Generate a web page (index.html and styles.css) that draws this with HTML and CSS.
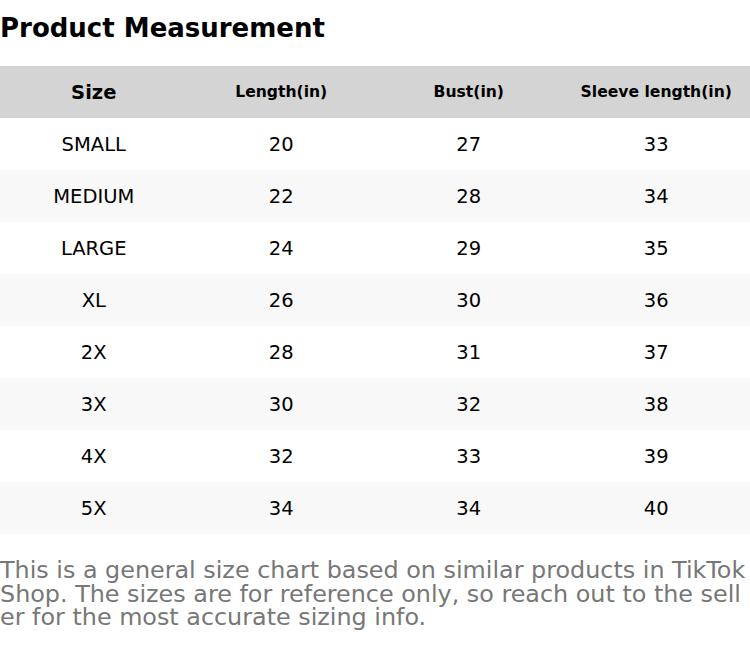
FILE: index.html
```html
<!DOCTYPE html>
<html>
<head>
<meta charset="utf-8">
<link rel="stylesheet" href="styles.css">
</head>
<body>
<h1 class="title">Product Measurement</h1>
<table class="chart">
  <thead>
    <tr><th class="size-head">Size</th><th>Length(in)</th><th>Bust(in)</th><th>Sleeve length(in)</th></tr>
  </thead>
  <tbody>
    <tr><td>SMALL</td><td>20</td><td>27</td><td>33</td></tr>
    <tr><td>MEDIUM</td><td>22</td><td>28</td><td>34</td></tr>
    <tr><td>LARGE</td><td>24</td><td>29</td><td>35</td></tr>
    <tr><td>XL</td><td>26</td><td>30</td><td>36</td></tr>
    <tr><td>2X</td><td>28</td><td>31</td><td>37</td></tr>
    <tr><td>3X</td><td>30</td><td>32</td><td>38</td></tr>
    <tr><td>4X</td><td>32</td><td>33</td><td>39</td></tr>
    <tr><td>5X</td><td>34</td><td>34</td><td>40</td></tr>
  </tbody>
</table>
<p class="note">This is a general size chart based on similar products in TikTok Shop. The sizes are for reference only, so reach out to the seller for the most accurate sizing info.</p>
</body>
</html>
```
FILE: styles.css
```css
html, body {
  margin: 0;
  padding: 0;
  background: #ffffff;
  font-family: "DejaVu Sans", sans-serif;
  color: #000;
}
.title {
  margin: 0;
  height: 66px;
  line-height: 56px;
  font-size: 26px;
  font-weight: bold;
}
.chart {
  width: 750px;
  border-collapse: collapse;
  table-layout: fixed;
}
.chart th {
  height: 52px;
  padding: 0;
  background: #d4d4d4;
  font-size: 15.6px;
  font-weight: bold;
  text-align: center;
}
.chart th.size-head {
  font-size: 19.5px;
}
.chart td {
  height: 52px;
  padding: 0;
  font-size: 19.5px;
  text-align: center;
}
.chart tbody tr:nth-child(even) td {
  background: #f8f8f8;
}
.note {
  margin: 25px 0 0;
  font-size: 23.85px;
  line-height: 23.6px;
  color: #777;
  word-break: break-all;
}
```
